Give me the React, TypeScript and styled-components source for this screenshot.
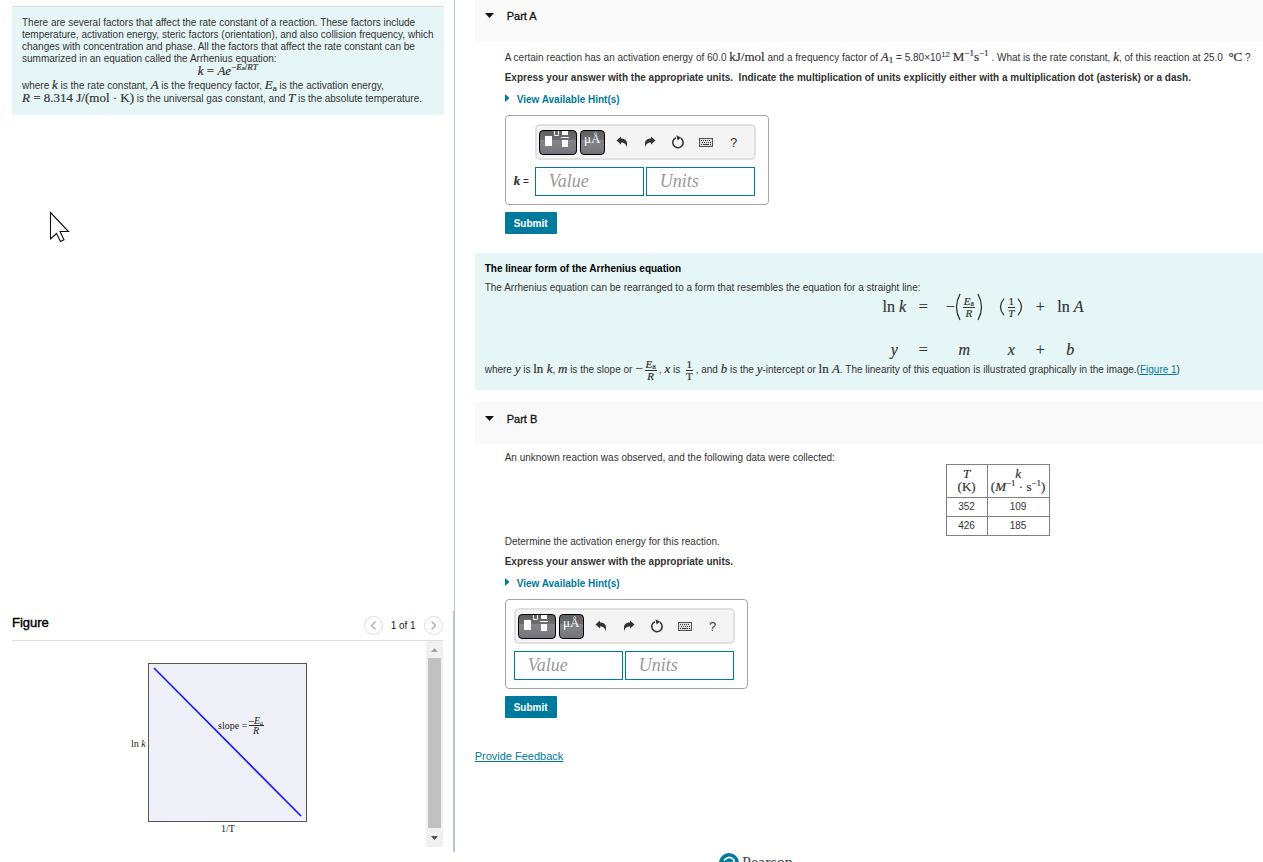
import React, { useId } from "react";
import styled, { createGlobalStyle } from "styled-components";

const teal = "#007a9c";
const sans = '"Liberation Sans", Arial, sans-serif';
const serif = '"Liberation Serif", "Times New Roman", serif';

const GlobalStyle = createGlobalStyle`
  *, *::before, *::after { box-sizing: border-box; }
  body { margin: 0; background: #fff; color: #333; font-family: ${sans}; font-size: 10px; line-height: 12px; }
  p, h1, h2, h3 { margin: 0; }
  button, input { font-family: inherit; }
`;

const Page = styled.div`
  display: grid;
  grid-template-columns: 36% minmax(0, 1fr);
  grid-template-rows: minmax(0, 1fr);
  height: 100vh;
  overflow: hidden;
`;

const Sidebar = styled.aside`
  display: flex;
  flex-direction: column;
  margin-bottom: 10px;
`;

const Context = styled.section`
  flex: 1;
  position: relative;
  padding: 6px 10px 0 12px;
  border-right: 1px solid #b5c6d9;
`;

const ContextBox = styled.div`
  padding: 10px;
  border-top: 1px solid #ddd;
  background: #e6f6f7;
`;

const Line = styled.p`
  line-height: 13px;
`;

const Formula = styled.p`
  line-height: 14px;
  text-align: center;
`;

const Math = styled.span<{ $size?: number }>`
  font-family: ${serif};
  font-size: ${(p) => p.$size ?? 13}px;
  line-height: 0;
  white-space: nowrap;
  -webkit-text-stroke: 0.2px currentColor;
  sup, sub { font-size: 9px; line-height: 0; }
  sup { vertical-align: 5px; }
  sub { vertical-align: -2px; }
  small { font-size: 7px; }
`;

const Power = styled.sup`
  font-size: 8px;
  line-height: 0;
  vertical-align: 4px;
`;

const Cursor = styled.svg`
  position: absolute;
  left: 49px;
  top: 211px;
`;

const FigurePanel = styled.section`
  padding: 0 10px 5px 12px;
  border-right: 2px solid #b5c6d9;
`;

const FigureHeader = styled.header`
  display: flex;
  align-items: center;
  justify-content: space-between;
  height: 30px;
  border-bottom: 1px solid #ddd;
`;

const FigureTitle = styled.h2`
  padding-bottom: 6px;
  color: #000;
  font-size: 13px;
  font-weight: 400;
  -webkit-text-stroke: 0.4px currentColor;
`;

const Pager = styled.nav`
  display: flex;
  align-items: center;
  gap: 8px;
  color: #222;
`;

const RoundButton = styled.button`
  display: flex;
  align-items: center;
  justify-content: center;
  width: 19px;
  height: 19px;
  padding: 0;
  border: 1px solid #ddd;
  border-radius: 50%;
  background: #fff;
`;

const FigureBody = styled.div`
  display: flex;
  height: 206px;
`;

const FigureCanvas = styled.div`
  flex: 1;
  display: flex;
  justify-content: center;
  padding-top: 22px;
`;

const ScrollTrack = styled.div`
  display: flex;
  flex-direction: column;
  align-items: center;
  width: 17px;
  background: #f1f1f1;
`;

const ScrollArrow = styled.svg`
  width: 17px;
  height: 17px;
`;

const ScrollThumb = styled.div`
  width: 13px;
  height: 170px;
  background: #c1c1c1;
`;

const Content = styled.main`
  margin-top: -1px;
  padding-left: 20px;
`;

const PartHeader = styled.header`
  display: flex;
  gap: 13px;
  height: 42px;
  padding: 11px 10px;
  background: #f9f9f9;
`;

const Triangle = styled.svg`
  flex: none;
  width: 9px;
  height: 12px;
`;

const PartTitle = styled.h2`
  color: #111;
  font-size: 11px;
  font-weight: 400;
  -webkit-text-stroke: 0.3px currentColor;
`;

const PartBody = styled.div<{ $top: number }>`
  padding: ${(p) => p.$top}px 0 0 30px;
`;

const Instruction = styled.p`
  margin-top: 8px;
  font-weight: 700;
`;

const HintButton = styled.button`
  display: flex;
  align-items: center;
  gap: 7px;
  margin-top: 10px;
  padding: 0;
  border: 0;
  background: none;
  color: ${teal};
  font-size: 10px;
  font-weight: 700;
  line-height: 12px;
`;

const AnswerBox = styled.div`
  display: flex;
  align-items: flex-end;
  width: fit-content;
  margin-top: 9px;
  padding: 8px 12px 8px 8px;
  border: 1px solid #a5a5a5;
  border-radius: 4px;
`;

const AnswerLabel = styled.label`
  width: 21px;
  line-height: 29px;
`;

const AnswerMain = styled.div`
  display: flex;
  flex-direction: column;
  gap: 7px;
`;

const Toolbar = styled.div`
  display: flex;
  align-items: center;
  height: 36px;
  padding: 0 6px 0 2px;
  border: 2px solid #e0e0e0;
  border-radius: 5px;
  background: #f4f4f4;
`;

const TemplateButton = styled.button<{ $width: number }>`
  display: flex;
  justify-content: center;
  width: ${(p) => p.$width}px;
  height: 25px;
  margin-right: 3px;
  padding: 0;
  border: 1px solid #000;
  border-radius: 4px;
  background: linear-gradient(#5e5e60 0, #6e6e70 40%, #85858d 40%, #74747a 100%);
  color: #fff;
  font-family: ${serif};
  font-size: 13px;
  line-height: 15px;
`;

const ToolButton = styled.button`
  display: flex;
  align-items: center;
  justify-content: center;
  width: 28px;
  height: 28px;
  padding: 0;
  border: 0;
  background: none;
  color: #333;
  font-size: 13px;
`;

const Fields = styled.div`
  display: flex;
  gap: 2px;
`;

const Field = styled.input`
  width: 109px;
  height: 29px;
  padding: 0 13px;
  border: 1px solid ${teal};
  background: #fff;
  font-family: ${serif};
  font-size: 18px;
  font-style: italic;
  &::placeholder { color: #999; opacity: 1; }
`;

const Submit = styled.button`
  display: block;
  height: 22px;
  margin-top: 7px;
  padding: 0 9px;
  border: 0;
  border-radius: 1px;
  background: ${teal};
  color: #fff;
  font-size: 10px;
  font-weight: 700;
`;

const InfoBox = styled.section`
  margin: 19px 0 12px;
  padding: 10px 10px 14px;
  background: #e6f6f7;
`;

const InfoTitle = styled.h3`
  margin-bottom: 7px;
  color: #000;
  font-size: 10px;
`;

const Equations = styled.div`
  display: grid;
  grid-template-columns: 24px 12px 48px 24px 12px 26px;
  grid-template-rows: 26px 26px;
  gap: 17px 11px;
  justify-content: center;
  align-items: center;
  justify-items: center;
  padding-left: 228px;
`;

const Bracketed = styled.span`
  display: inline-flex;
  align-items: center;
`;

const Fraction = styled.span<{ $size: number }>`
  display: inline-flex;
  flex-direction: column;
  align-items: center;
  margin: -8px 2px;
  font-family: ${serif};
  font-size: ${(p) => p.$size}px;
  line-height: 11px;
  vertical-align: middle;
  -webkit-text-stroke: 0.2px currentColor;
  sub { font-size: 8px; line-height: 0; vertical-align: -1px; }
  > span:first-child { border-bottom: 1px solid #333; }
  > span { padding: 0 1px; }
`;

const Link = styled.a`
  color: ${teal};
`;

const TableRow = styled.div`
  display: flex;
  justify-content: center;
  padding-left: 30%;
`;

const DataTable = styled.table`
  border-collapse: collapse;
  text-align: center;
  th, td { border: 1px solid #808080; padding: 3px; font-weight: 400; }
  th { height: 33px; line-height: 13px; }
  td { height: 19px; }
  th:first-child { width: 41px; }
  th:last-child { width: 62px; }
`;

const Feedback = styled.a`
  display: block;
  width: fit-content;
  margin-top: 32px;
  color: ${teal};
  font-size: 11px;
`;

const Footer = styled.footer`
  display: flex;
  align-items: center;
  gap: 3px;
  margin: 91px 0 0 31%;
  color: #444;
  font-family: ${serif};
  font-size: 16px;
  line-height: 20px;
`;

function Fractional({ top, bottom, size = 11 }: { top: React.ReactNode; bottom: React.ReactNode; size?: number }) {
  return (
    <Fraction $size={size}>
      <span>{top}</span>
      <span>{bottom}</span>
    </Fraction>
  );
}

function Paren({ side, height }: { side: "left" | "right"; height: number }) {
  const d = side === "left" ? "M5 1Q-2 15 5 29" : "M1 1Q8 15 1 29";
  return (
    <svg width="6" height={height} viewBox="0 0 6 30" preserveAspectRatio="none" aria-hidden>
      <path d={d} fill="none" stroke="#333" strokeWidth="1.3" />
    </svg>
  );
}

function ArrowIcon({ flip }: { flip?: boolean }) {
  return (
    <svg width="12" height="12" viewBox="0 0 12 12" aria-hidden>
      <path
        transform={flip ? "matrix(-1 0 0 1 12 0)" : undefined}
        d="M0.5 4.4 5 0.4V2.6C9.500 2.600 12.500 5.200 10.300 11.600C10.300 8 8.400 6.600 5 6.600V8.600Z"
        fill="#333"
      />
    </svg>
  );
}

function ResetIcon() {
  return (
    <svg width="14" height="14" viewBox="0 0 14 14" aria-hidden>
      <path d="M9.8 3.2A5.2 5.2 0 1 1 5 2.7" fill="none" stroke="#333" strokeWidth="1.6" />
      <path d="M5.4 0.2 10 2.6 6.6 5.4Z" fill="#333" />
    </svg>
  );
}

function KeyboardIcon() {
  return (
    <svg width="14" height="9" viewBox="0 0 14 9" aria-hidden>
      <rect x="0.5" y="0.5" width="13" height="8" fill="#ddd" stroke="#555" />
      <path d="M2 2.5H12M3 4.5H12" stroke="#444" strokeDasharray="1 1" />
      <path d="M2 6.5H3M4 6.5H10M11 6.5H12" stroke="#444" />
    </svg>
  );
}

function AnswerEditor({ labelled }: { labelled?: boolean }) {
  const id = useId();
  return (
    <AnswerBox>
      {labelled && (
        <AnswerLabel htmlFor={id}>
          <Math><b><i>k</i></b></Math> =
        </AnswerLabel>
      )}
      <AnswerMain>
        <Toolbar role="toolbar" aria-label="Answer tools">
          <TemplateButton $width={38} aria-label="Templates">
            <svg width="28" height="20" viewBox="0 0 28 20" aria-hidden>
              <path d="M1 5H8V15H1ZM18 0H24V4H18ZM18 9H24V16H18Z" fill="#fff" />
              <path d="M10.500 0V4.500H14.500V0M17 6.500H25" fill="none" stroke="#fff" />
            </svg>
          </TemplateButton>
          <TemplateButton $width={25} aria-label="Symbols">μÅ</TemplateButton>
          <ToolButton aria-label="Undo"><ArrowIcon /></ToolButton>
          <ToolButton aria-label="Redo"><ArrowIcon flip /></ToolButton>
          <ToolButton aria-label="Reset"><ResetIcon /></ToolButton>
          <ToolButton aria-label="Keyboard shortcuts"><KeyboardIcon /></ToolButton>
          <ToolButton aria-label="Help">?</ToolButton>
        </Toolbar>
        <Fields>
          <Field id={id} placeholder="Value" aria-label={labelled ? undefined : "Value"} />
          <Field placeholder="Units" aria-label="Units" />
        </Fields>
      </AnswerMain>
    </AnswerBox>
  );
}

function PartHeading({ title }: { title: string }) {
  return (
    <PartHeader>
      <Triangle viewBox="0 0 9 12" aria-hidden><path d="M0 3H9L4.500 8Z" fill="#111" /></Triangle>
      <PartTitle>{title}</PartTitle>
    </PartHeader>
  );
}

function Hint() {
  return (
    <HintButton>
      <svg width="5" height="12" viewBox="0 0 5 12" aria-hidden><path d="M0 0V8L4.500 4Z" fill={teal} /></svg>
      View Available Hint(s)
    </HintButton>
  );
}

function Chart() {
  return (
    <svg width="176" height="174" viewBox="0 0 176 174" fontFamily="Liberation Serif, serif" fontSize="10" fill="#222" role="img">
      <rect x="17.500" y="0.500" width="158" height="158" fill="#eff0f7" stroke="#555" />
      <path d="M23 5 170 153" stroke="#1a1aff" strokeWidth="1.700" />
      <text x="0" y="84">ln <tspan fontStyle="italic">k</tspan></text>
      <text x="87" y="66">slope =</text>
      <text x="118" y="61">–<tspan fontStyle="italic">E</tspan><tspan fontSize="6" dy="1" fontStyle="italic">a</tspan></text>
      <path d="M118 62.500H133" stroke="#222" />
      <text x="122" y="71" fontStyle="italic">R</text>
      <text x="90" y="169">1/T</text>
    </svg>
  );
}

export default function App() {
  return (
    <>
      <GlobalStyle />
      <Page>
        <Sidebar>
          <Context>
            <ContextBox>
              <p>
                There are several factors that affect the rate constant of a reaction. These factors include
                temperature, activation energy, steric factors (orientation), and also collision frequency, which
                changes with concentration and phase. All the factors that affect the rate constant can be
                summarized in an equation called the Arrhenius equation:
              </p>
              <Formula>
                <Math><i>k</i> = <i>Ae</i><sup>−<i>E</i><small>a</small>/<i>RT</i></sup></Math>
              </Formula>
              <Line>
                where <Math><i>k</i></Math> is the rate constant, <Math><i>A</i></Math> is the frequency factor,{" "}
                <Math><i>E</i><sub>a</sub></Math> is the activation energy,
              </Line>
              <Line>
                <Math><i>R</i> = 8.314 J/(mol · K)</Math> is the universal gas constant, and <Math><i>T</i></Math> is
                the absolute temperature.
              </Line>
            </ContextBox>
            <Cursor width="21" height="32" viewBox="0 0 21 32" aria-hidden>
              <path d="M1.500 1.500V28L7.500 22.500 11.500 30.500 15 28.700 11 20.500H19.500Z" fill="#fff" stroke="#111" strokeWidth="1.100" />
            </Cursor>
          </Context>
          <FigurePanel id="figure">
            <FigureHeader>
              <FigureTitle>Figure</FigureTitle>
              <Pager aria-label="Figures">
                <RoundButton aria-label="Previous figure">
                  <svg width="7" height="9" viewBox="0 0 7 9"><path d="M5.500 0.500 1.500 4.500 5.500 8.500" fill="none" stroke="#aaa" strokeWidth="1.300" /></svg>
                </RoundButton>
                <span>1 of 1</span>
                <RoundButton aria-label="Next figure">
                  <svg width="7" height="9" viewBox="0 0 7 9"><path d="M1.500 0.500 5.500 4.500 1.500 8.500" fill="none" stroke="#aaa" strokeWidth="1.300" /></svg>
                </RoundButton>
              </Pager>
            </FigureHeader>
            <FigureBody>
              <FigureCanvas><Chart /></FigureCanvas>
              <ScrollTrack>
                <ScrollArrow viewBox="0 0 17 17"><path d="M5 11 8.500 7 12 11Z" fill="#a3a3a3" /></ScrollArrow>
                <ScrollThumb />
                <ScrollArrow viewBox="0 0 17 17"><path d="M5 8 8.500 12 12 8Z" fill="#505050" /></ScrollArrow>
              </ScrollTrack>
            </FigureBody>
          </FigurePanel>
        </Sidebar>

        <Content>
          <PartHeading title="Part A" />
          <PartBody $top={11}>
            <p>
              A certain reaction has an activation energy of 60.0 <Math>kJ/mol</Math> and a frequency factor of{" "}
              <Math><i>A</i><sub>1</sub></Math> = 5.80×10<Power>12</Power>{" "}
              <Math>M<sup>−1</sup>s<sup>−1</sup></Math> . What is
              the rate constant, <Math><i>k</i></Math>, of this reaction at 25.0 &nbsp;<Math>°C</Math> ?
            </p>
            <Instruction>
              Express your answer with the appropriate units.&nbsp; Indicate the multiplication of units explicitly
              either with a multiplication dot (asterisk) or a dash.
            </Instruction>
            <Hint />
            <AnswerEditor labelled />
            <Submit>Submit</Submit>
          </PartBody>

          <InfoBox>
            <InfoTitle>The linear form of the Arrhenius equation</InfoTitle>
            <p>The Arrhenius equation can be rearranged to a form that resembles the equation for a straight line:</p>
            <Equations>
              <Math $size={16}>ln <i>k</i></Math>
              <Math $size={16}>=</Math>
              <Bracketed>
                <Math $size={16}>−</Math>
                <Paren side="left" height={28} />
                <Fractional top={<><i>E</i><sub>a</sub></>} bottom={<i>R</i>} />
                <Paren side="right" height={28} />
              </Bracketed>
              <Bracketed>
                <Paren side="left" height={18} />
                <Fractional top="1" bottom={<i>T</i>} />
                <Paren side="right" height={18} />
              </Bracketed>
              <Math $size={16}>+</Math>
              <Math $size={16}>ln <i>A</i></Math>
              <Math $size={16}><i>y</i></Math>
              <Math $size={16}>=</Math>
              <Math $size={16}><i>m</i></Math>
              <Math $size={16}><i>x</i></Math>
              <Math $size={16}>+</Math>
              <Math $size={16}><i>b</i></Math>
            </Equations>
            <Line>
              where <Math><i>y</i></Math> is <Math>ln <i>k</i></Math>, <Math><i>m</i></Math> is the slope or{" "}
              <Math>−</Math><Fractional top={<><i>E</i><sub>a</sub></>} bottom={<i>R</i>} />,{" "}
              <Math><i>x</i></Math> is <Fractional top="1" bottom="T" />, and <Math><i>b</i></Math> is the{" "}
              <Math><i>y</i></Math>-intercept or <Math>ln <i>A</i></Math>. The linearity of this equation is illustrated
              graphically in the image.(<Link href="#figure">Figure 1</Link>)
            </Line>
          </InfoBox>

          <PartHeading title="Part B" />
          <PartBody $top={8}>
            <p>An unknown reaction was observed, and the following data were collected:</p>
            <TableRow>
              <DataTable>
                <thead>
                  <tr>
                    <th><Math><i>T</i></Math><br /><Math>(K)</Math></th>
                    <th><Math><i>k</i></Math><br /><Math>(<i>M</i><sup>−1</sup> · s<sup>−1</sup>)</Math></th>
                  </tr>
                </thead>
                <tbody>
                  <tr><td>352</td><td>109</td></tr>
                  <tr><td>426</td><td>185</td></tr>
                </tbody>
              </DataTable>
            </TableRow>
            <p>Determine the activation energy for this reaction.</p>
            <Instruction>Express your answer with the appropriate units.</Instruction>
            <Hint />
            <AnswerEditor />
            <Submit>Submit</Submit>
          </PartBody>
          <Feedback href="#feedback">Provide Feedback</Feedback>
          <Footer>
            <svg width="20" height="20" viewBox="0 0 20 20" aria-hidden>
              <circle cx="10" cy="10" r="10" fill={teal} />
              <path d="M5 7.500Q10 1.500 15 7Q15 11 10 12" fill="none" stroke="#fff" strokeWidth="1.800" />
              <circle cx="10" cy="15" r="1.500" fill="#fff" />
            </svg>
            <span>Pearson</span>
          </Footer>
        </Content>
      </Page>
    </>
  );
}
